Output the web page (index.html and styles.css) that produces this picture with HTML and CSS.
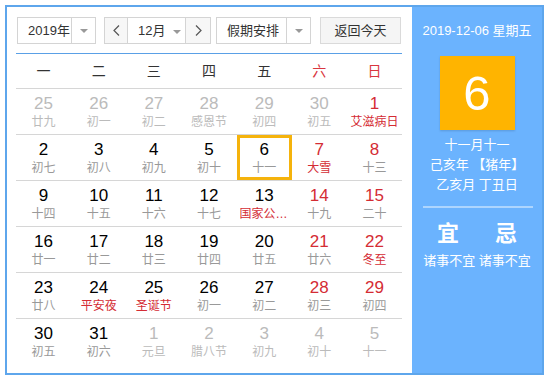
FILE: index.html
```html
<!DOCTYPE html>
<html lang="zh-CN">
    <head>
        <meta charset="UTF-8" />
        <meta name="viewport" content="width=device-width, initial-scale=1.0" />
        <link rel="stylesheet" href="styles.css">
        <title>万年历</title>
    </head>
    <body>
        <div class="calendar">
            <div class="calendar__main">
                <div class="toolbar">
                    <div class="select select--year">
                        <span class="select__value">2019年</span>
                        <span class="select__arrow"></span>
                    </div>

                    <div class="month">
                        <span class="month__btn">
                            <svg width="7" height="11" viewBox="0 0 7 11"><polyline points="6,0.5 1,5.5 6,10.5" fill="none" stroke="#555" stroke-width="1.2"/></svg>
                        </span>
                        <span class="month__value">12月<span class="select__arrow select__arrow--inline"></span></span>
                        <span class="month__btn month__btn--next">
                            <svg width="7" height="11" viewBox="0 0 7 11"><polyline points="1,0.5 6,5.5 1,10.5" fill="none" stroke="#555" stroke-width="1.2"/></svg>
                        </span>
                    </div>

                    <div class="select select--holiday">
                        <span class="select__value">假期安排</span>
                        <span class="select__arrow"></span>
                    </div>

                    <div class="today-btn">返回今天</div>
                </div>

                <div class="weekdays">
                    <span>一</span>
                    <span>二</span>
                    <span>三</span>
                    <span>四</span>
                    <span>五</span>
                    <span class="red">六</span>
                    <span class="red">日</span>
                </div>

                <div class="days">
                    <div class="week">
                        <div class="day day--other"><b>25</b><i>廿九</i></div>
                        <div class="day day--other"><b>26</b><i>初一</i></div>
                        <div class="day day--other"><b>27</b><i>初二</i></div>
                        <div class="day day--other"><b>28</b><i>感恩节</i></div>
                        <div class="day day--other"><b>29</b><i>初四</i></div>
                        <div class="day day--other"><b>30</b><i>初五</i></div>
                        <div class="day day--rest day--fest"><b>1</b><i>艾滋病日</i></div>
                    </div>
                    <div class="week">
                        <div class="day"><b>2</b><i>初七</i></div>
                        <div class="day"><b>3</b><i>初八</i></div>
                        <div class="day"><b>4</b><i>初九</i></div>
                        <div class="day"><b>5</b><i>初十</i></div>
                        <div class="day day--today"><b>6</b><i>十一</i></div>
                        <div class="day day--rest day--fest"><b>7</b><i>大雪</i></div>
                        <div class="day day--rest"><b>8</b><i>十三</i></div>
                    </div>
                    <div class="week">
                        <div class="day"><b>9</b><i>十四</i></div>
                        <div class="day"><b>10</b><i>十五</i></div>
                        <div class="day"><b>11</b><i>十六</i></div>
                        <div class="day"><b>12</b><i>十七</i></div>
                        <div class="day day--fest"><b>13</b><i>国家公祭日</i></div>
                        <div class="day day--rest"><b>14</b><i>十九</i></div>
                        <div class="day day--rest"><b>15</b><i>二十</i></div>
                    </div>
                    <div class="week">
                        <div class="day"><b>16</b><i>廿一</i></div>
                        <div class="day"><b>17</b><i>廿二</i></div>
                        <div class="day"><b>18</b><i>廿三</i></div>
                        <div class="day"><b>19</b><i>廿四</i></div>
                        <div class="day"><b>20</b><i>廿五</i></div>
                        <div class="day day--rest"><b>21</b><i>廿六</i></div>
                        <div class="day day--rest day--fest"><b>22</b><i>冬至</i></div>
                    </div>
                    <div class="week">
                        <div class="day"><b>23</b><i>廿八</i></div>
                        <div class="day day--fest"><b>24</b><i>平安夜</i></div>
                        <div class="day day--fest"><b>25</b><i>圣诞节</i></div>
                        <div class="day"><b>26</b><i>初一</i></div>
                        <div class="day"><b>27</b><i>初二</i></div>
                        <div class="day day--rest"><b>28</b><i>初三</i></div>
                        <div class="day day--rest"><b>29</b><i>初四</i></div>
                    </div>
                    <div class="week">
                        <div class="day"><b>30</b><i>初五</i></div>
                        <div class="day"><b>31</b><i>初六</i></div>
                        <div class="day day--other"><b>1</b><i>元旦</i></div>
                        <div class="day day--other"><b>2</b><i>腊八节</i></div>
                        <div class="day day--other"><b>3</b><i>初九</i></div>
                        <div class="day day--other"><b>4</b><i>初十</i></div>
                        <div class="day day--other"><b>5</b><i>十一</i></div>
                    </div>
                </div>
            </div>

            <div class="panel">
                <div class="panel__date">2019-12-06 星期五</div>
                <div class="panel__day">6</div>
                <div class="panel__lunar">
                    <p>十一月十一</p>
                    <p>己亥年 【猪年】</p>
                    <p>乙亥月 丁丑日</p>
                </div>
                <div class="panel__line"></div>
                <div class="panel__yiji">
                    <span>宜</span>
                    <span>忌</span>
                </div>
                <div class="panel__note">诸事不宜 诸事不宜</div>
            </div>
        </div>
    </body>
</html>
```

FILE: styles.css
```css
*,
*::before,
*::after {
    box-sizing: border-box;
}

body,
p {
    margin: 0;
}

body {
    font-family: 'Liberation Sans', 'Noto Sans CJK SC', sans-serif;
    color: #333;
    background: #fff;
}

.calendar {
    display: flex;
    width: 539px;
    height: 370px;
    margin: 5px 0 0 5px;
    border: 2px solid #5ea6ec;
    background: #fff;
}

.calendar__main {
    width: 405px;
    padding: 10px 10px 0 9px;
}

/* toolbar */

.toolbar {
    display: flex;
    height: 27px;
    margin-left: 1px;
    font-size: 13px;
}

.select {
    display: flex;
    border: 1px solid #d4d4d4;
    background: #fff;
}

.select--year {
    width: 79px;
}

.select--holiday {
    width: 95px;
    margin-left: 5px;
}

.select__value {
    flex: 1;
    padding-left: 10px;
    line-height: 25px;
}

.select__arrow {
    position: relative;
    width: 24px;
    border-left: 1px solid #d4d4d4;
}

.select__arrow::after {
    content: '';
    position: absolute;
    top: 11px;
    left: 8px;
    border: 4px solid transparent;
    border-top: 4px solid #999;
    border-bottom: 0;
}

.select__arrow--inline {
    display: inline-block;
    width: 8px;
    height: 10px;
    margin-left: 8px;
    border-left: 0;
    vertical-align: middle;
}

.select__arrow--inline::after {
    top: 3px;
    left: 0;
}

.month {
    display: flex;
    width: 107px;
    margin-left: 8px;
    border: 1px solid #d4d4d4;
}

.month__btn {
    display: flex;
    align-items: center;
    justify-content: center;
    width: 23px;
    background: #f7f7f7;
    border-right: 1px solid #d4d4d4;
}

.month__btn--next {
    width: 25px;
    border-right: 0;
    border-left: 1px solid #d4d4d4;
}

.month__value {
    flex: 1;
    padding-left: 10px;
    line-height: 25px;
}

.today-btn {
    width: 81px;
    margin-left: 9px;
    line-height: 25px;
    text-align: center;
    border: 1px solid #dadada;
    background: #f5f5f5;
}

/* grid */

.weekdays {
    display: grid;
    grid-template-columns: repeat(7, 1fr);
    height: 36px;
    margin-top: 9px;
    border-top: 1px solid #5aa0e6;
    border-bottom: 1px solid #d6d6d6;
    font-size: 14px;
    line-height: 34px;
    text-align: center;
}

.red {
    color: #d9363e;
}

.week {
    display: grid;
    grid-template-columns: repeat(7, 1fr);
    height: 46px;
    border-bottom: 1px solid #d6d6d6;
}

.week:last-child {
    border-bottom: 0;
}

.day {
    padding: 5px 3px 0;
    text-align: center;
    overflow: hidden;
}

.day b {
    display: block;
    font-size: 17px;
    font-weight: 400;
    line-height: 20px;
    color: #000;
}

.day i {
    display: block;
    font-size: 12px;
    font-style: normal;
    line-height: 16px;
    color: #999;
    white-space: nowrap;
    overflow: hidden;
    text-overflow: ellipsis;
}

.day--rest b {
    color: #d42c34;
}

.day--fest i {
    color: #d42c34;
}

.day--other b,
.day--other i {
    color: #bbb;
}

.day--other.day--rest b,
.day--other.day--rest i,
.day--other.day--fest i {
    color: #d42c34;
}

.day--today {
    box-shadow: inset 0 0 0 3px #f5b30c;
}

/* right panel */

.panel {
    flex: 1;
    padding-top: 14px;
    background: #6bb3fe;
    color: #fff;
    text-align: center;
}

.panel__date {
    font-size: 13px;
    line-height: 20px;
}

.panel__day {
    width: 75px;
    height: 74px;
    margin: 15px auto 0;
    background: #ffb400;
    font-size: 49px;
    line-height: 74px;
    box-shadow: 0 1px 2px rgba(0, 0, 0, 0.15);
}

.panel__lunar {
    margin-top: 5px;
    font-size: 13px;
    line-height: 20px;
}

.panel__line {
    height: 2px;
    margin: 11px 9px 0 11px;
    background: rgba(255, 255, 255, 0.45);
}

.panel__yiji {
    display: flex;
    justify-content: center;
    gap: 36px;
    margin-top: 11px;
    font-size: 22px;
    font-weight: 700;
    line-height: 30px;
}

.panel__note {
    margin-top: 3px;
    font-size: 13px;
    line-height: 18px;
}
```
